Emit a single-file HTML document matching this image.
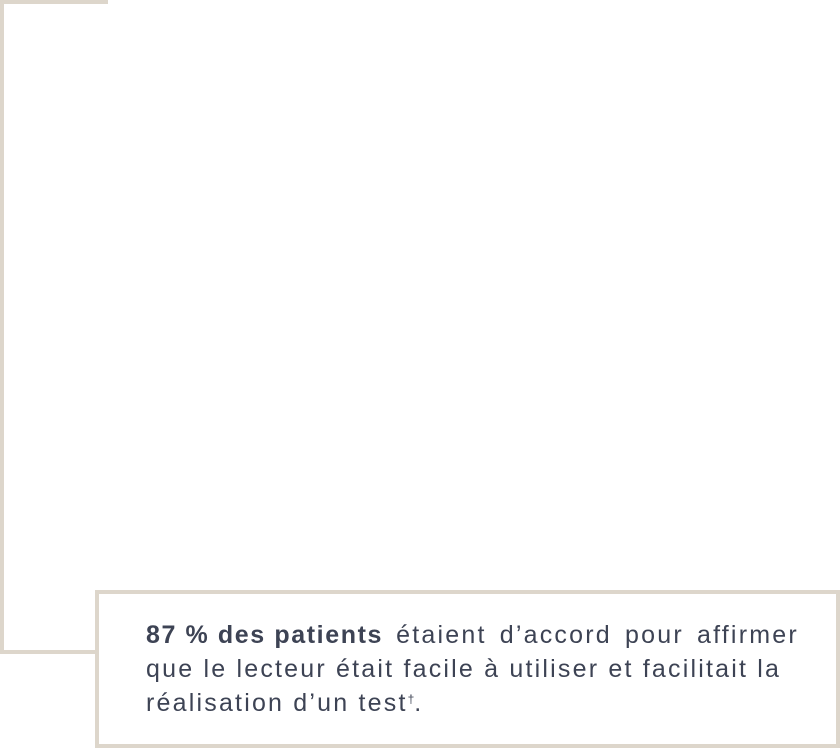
<!DOCTYPE html>
<html><head><style>
body{margin:0;width:840px;height:748px;background:#fff;position:relative;overflow:hidden;font-family:"Liberation Sans",sans-serif}
.l{position:absolute;background:#ddd6cb}
.box{position:absolute;left:95px;top:590px;width:737px;height:150px;border:4px solid #ddd6cb;background:#fff}
.t{position:absolute;left:47px;top:24px;white-space:nowrap;font-size:25px;letter-spacing:2.2px;line-height:34px;color:#3d4354}
b{font-weight:bold;letter-spacing:1.6px}
.w{word-spacing:4px}
sup{font-size:12px;vertical-align:top;position:relative;top:-4px;letter-spacing:0}
</style></head><body>
<div class="l" style="left:0;top:0;width:108px;height:4px"></div>
<div class="l" style="left:0;top:0;width:4px;height:654px"></div>
<div class="l" style="left:0;top:650px;width:100px;height:4px"></div>
<div class="box"><div class="t"><b>87 % des patients</b><span class="w"> étaient d’accord pour affirmer</span><br>que le lecteur était facile à utiliser et facilitait la<br>réalisation d’un test<sup>†</sup>.</div></div>
</body></html>
